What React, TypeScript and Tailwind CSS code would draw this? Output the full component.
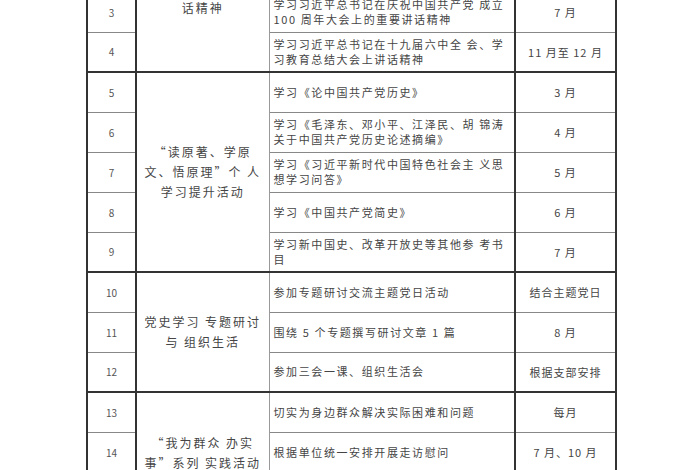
import React from 'react';

type Row = { no: number; content: React.ReactNode; time: string };

type Group = { title: React.ReactNode; titleClass?: string; rows: Row[] };

const groups: Group[] = [
  {
    title: <>话精神</>,
    titleClass: 'align-top pt-[5px]',
    rows: [
      { no: 3, content: <>学习习近平总书记在庆祝中国共产党 成立<br />100 周年大会上的重要讲话精神</>, time: '7 月' },
      { no: 4, content: <>学习习近平总书记在十九届六中全 会、学<br />习教育总结大会上讲话精神</>, time: '11 月至 12 月' },
    ],
  },
  {
    title: <>“读原著、学原<br />文、悟原理”个 人<br />学习提升活动</>,
    rows: [
      { no: 5, content: <>学习《论中国共产党历史》</>, time: '3 月' },
      { no: 6, content: <>学习《毛泽东、邓小平、江泽民、胡 锦涛<br />关于中国共产党历史论述摘编》</>, time: '4 月' },
      { no: 7, content: <>学习《习近平新时代中国特色社会主 义思<br />想学习问答》</>, time: '5 月' },
      { no: 8, content: <>学习《中国共产党简史》</>, time: '6 月' },
      { no: 9, content: <>学习新中国史、改革开放史等其他参 考书<br />目</>, time: '7 月' },
    ],
  },
  {
    title: <>党史学习 专题研讨<br />与 组织生活</>,
    rows: [
      { no: 10, content: <>参加专题研讨交流主题党日活动</>, time: '结合主题党日' },
      { no: 11, content: <>围绕 5 个专题撰写研讨文章 1 篇</>, time: '8 月' },
      { no: 12, content: <>参加三会一课、组织生活会</>, time: '根据支部安排' },
    ],
  },
  {
    title: <>“我为群众 办实<br />事”系列 实践活动</>,
    rows: [
      { no: 13, content: <>切实为身边群众解决实际困难和问题</>, time: '每月' },
      { no: 14, content: <>根据单位统一安排开展走访慰问</>, time: '7 月、10 月' },
      // continues below the visible area
      { no: 0, content: <></>, time: '' },
    ],
  },
];

const App = () => {
  return (
    <div
      className="w-[700px] h-[470px] overflow-hidden bg-white text-[#454545]"
      style={{ fontFamily: '"Noto Sans CJK SC", "Noto Sans", sans-serif' }}
    >
      <table className="table-fixed border-collapse ml-[86px] -mt-[9px] w-[529px]">
        <colgroup>
          <col className="w-[49px]" />
          <col className="w-[133px]" />
          <col className="w-[246px]" />
          <col className="w-[101px]" />
        </colgroup>
        <tbody>
          {groups.map((g, gi) =>
            g.rows.map((r, i) => {
              const top = i === 0 ? 'border-t-2 border-t-[#333]' : 'border-t border-t-[#888]';
              return (
                <tr key={`${gi}-${i}`} className="h-[40px]">
                  <td className={`border-l-2 border-r-2 border-[#333] ${top} text-center text-[10px] text-[#555]`}>
                    {r.no > 0 ? r.no : ''}
                  </td>
                  {i === 0 && (
                    <td
                      rowSpan={g.rows.length}
                      className={`border-t-2 border-t-[#333] border-r border-r-[#999] text-center text-[12px] leading-[20px] tracking-[2px] px-0 ${g.titleClass ?? 'align-middle'}`}
                    >
                      {g.title}
                    </td>
                  )}
                  <td className={`${top} border-r-2 border-r-[#333] pl-[4px] pr-0 text-left text-[11px] leading-[15px] tracking-[1.6px]`}>
                    {r.content}
                  </td>
                  <td className={`${top} border-r-2 border-r-[#333] text-center text-[11px] tracking-[1px]`}>
                    {r.time}
                  </td>
                </tr>
              );
            })
          )}
        </tbody>
      </table>
    </div>
  );
};

export default App;
